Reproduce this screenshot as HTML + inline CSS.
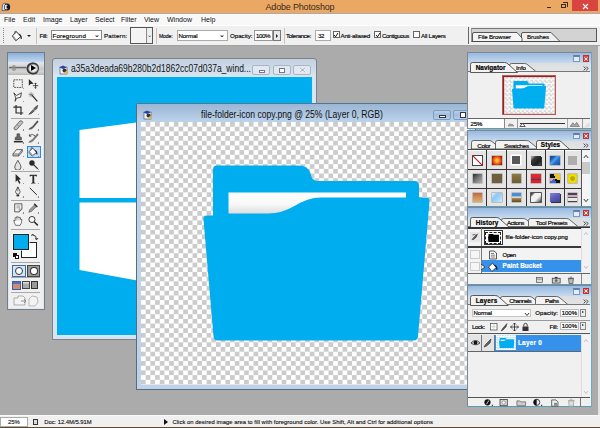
<!DOCTYPE html>
<html><head><meta charset="utf-8"><title>Adobe Photoshop</title>
<style>
*{box-sizing:border-box;margin:0;padding:0}
html,body{width:600px;height:428px;overflow:hidden}
body{position:relative;background:#ababab;font-family:"Liberation Sans",sans-serif;color:#111}
.a{position:absolute}
.t{position:absolute;white-space:nowrap;line-height:1}
#title{left:0;top:0;width:600px;height:13.2px;background:#eba864}
#menu{left:0;top:13.5px;width:600px;height:11.5px;background:#f8f8f8}
#menu span{position:absolute;top:2.4px;font-size:7.8px;transform:scaleX(.9);transform-origin:0 0;line-height:1;color:#111}
#opt{left:0;top:25px;width:600px;height:21px;background:#f0f0f0;border-top:1px solid #fff;border-bottom:1px solid #a2a2a2}
#opt .t{font-size:6.2px;top:6.5px;color:#000;-webkit-text-stroke:.15px #000}
.box{position:absolute;background:#fff;border:1px solid #8a8a8a}
.cb{position:absolute;width:7px;height:7px;background:#fff;border:1px solid #666;top:5px}
#status{left:0;top:414.5px;width:600px;height:13.5px;background:#f0f0f0;border-top:1px solid #fafafa}
#status .t{font-size:5.9px;top:4px;color:#111;-webkit-text-stroke:.12px #111}
.doc{position:absolute;background:linear-gradient(#c3d0de,#d7e4f2 17px,#d7e4f2);border:1px solid #7b8388;border-radius:3px 3px 0 0}
.pal{position:absolute;background:#f0f0f0;border:1px solid #7d8791;border-right-color:#6aa9c4;border-bottom-color:#5a9cb8}
.pal .hd{position:absolute;left:0;top:0;right:0;height:19px;background:linear-gradient(#98b9e1,#c6daee 10px,#dcdfe2 10.5px,#e2e3e4 19px)}
.pal .t{font-size:6px;color:#111;-webkit-text-stroke:.18px currentColor}
.mb{position:absolute;width:6px;height:6px;top:2px}
.tab{position:absolute;height:10px;background:#ececec;border:1px solid #555;border-bottom:none;border-radius:2px 2px 0 0}

.wb{position:absolute;width:18px;height:10px;border:1px solid #aab4c2;border-radius:2px;background:#dfe8f3}
.wb i,.wb2 i{position:absolute;display:block}
.wb2{position:absolute;width:18.5px;height:10px;border:1px solid #7f9cbd;border-radius:2px;background:linear-gradient(#b9d0ea,#9fbde0 50%,#b5cfe9)}
.checker{background:repeating-conic-gradient(#cbcbcb 0 25%,#fff 0 50%) 0 0/9.375px 9.375px}
</style></head><body>

<!-- Title bar -->
<div id="title" class="a">
  <svg class="a" style="left:1px;top:2px" width="10" height="10" viewBox="0 0 10 10"><path d="M1 8.5 L1.5 3 Q2 1 4 1.2 L5 1.5 L4 5 L4.5 8.5 Z" fill="#cfe3f4" stroke="#2b3350" stroke-width=".6"/><ellipse cx="6.2" cy="5" rx="3" ry="3.6" fill="#1c1a2a"/><ellipse cx="5.2" cy="5" rx="1.5" ry="2.6" fill="#e6ecf4"/><path d="M5.6 3.6 L8 5 L5.6 6.4 Z" fill="#000"/></svg>
  <div class="t" style="left:265.5px;top:2.8px;font-size:9px;letter-spacing:-.18px;color:#3a2a1a">Adobe Photoshop</div>
  <div class="a" style="left:546.5px;top:6.5px;width:4.5px;height:1.5px;background:#3a2a1a"></div>
  <div class="a" style="left:560.5px;top:3.5px;width:5px;height:4.5px;border:1px solid #3a2a1a"></div>
  <div class="a" style="left:562.5px;top:2px;width:5px;height:4.5px;border:1px solid #3a2a1a;border-left:none;border-bottom:none"></div>
  <div class="a" style="left:572px;top:0;width:26px;height:11px;background:#d8443f"></div>
  <svg class="a" style="left:582px;top:2.5px" width="7" height="7" viewBox="0 0 7 7"><path d="M1 1 L6 6 M6 1 L1 6" stroke="#fff" stroke-width="1.1"/></svg>
</div>

<!-- Menu bar -->
<div id="menu" class="a">
  <span style="left:4px">File</span><span style="left:23px">Edit</span><span style="left:43px">Image</span>
  <span style="left:70px">Layer</span><span style="left:95px">Select</span><span style="left:121px">Filter</span>
  <span style="left:144px">View</span><span style="left:167px">Window</span><span style="left:201px">Help</span>
</div>

<!-- Options bar -->
<div id="opt" class="a">
  <div class="a" style="left:3px;top:2px;width:0;height:15px;border-left:1px dotted #888"></div>
  <svg class="a" style="left:11px;top:3.5px" width="13" height="12" viewBox="0 0 13 12"><path d="M1.2 6 L5.6 1.8 L9.8 6.6 L4.8 10.8 Z" fill="#fafafa" stroke="#222" stroke-width=".9"/><path d="M1.2 6 L4.8 10.8 L5.8 9.9 L2.2 5.2 Z" fill="#999"/><path d="M5.6 1.8 Q3.6 -.3 3.4 3.6" fill="none" stroke="#333" stroke-width=".7"/><path d="M7.4 3.6 Q10.6 4 10.9 8.6 Q10.2 9.6 9.6 8.4 Q9.8 6 8.6 5 Z" fill="#1a1a1a"/></svg>
  <div class="a" style="left:27px;top:9px;border:2px solid transparent;border-top:2.5px solid #222;border-bottom:none"></div>
  <div class="a" style="left:36px;top:2px;width:1px;height:16px;background:#c4c4c4"></div>
  <div class="t" style="left:39.5px;letter-spacing:-0.33px">Fill:</div>
  <div class="box" style="left:51px;top:4px;width:51px;height:10px"></div>
  <div class="t" style="left:52.5px;letter-spacing:0.15px">Foreground</div>
  <div class="t" style="left:94px;top:5px;font-size:7px">⌄</div>
  <div class="t" style="left:104.0px;letter-spacing:0.23px">Pattern:</div>
  <div class="box" style="left:130px;top:1px;width:22.5px;height:17px;background:#f4f4f4;border-color:#555"></div>
  <div class="a" style="left:146px;top:2px;width:5.5px;height:15px;border-left:1px solid #888;background:#eee"></div>
  <div class="t" style="left:146.5px;top:6px;font-size:6px;color:#555">⌄</div>
  <div class="a" style="left:156px;top:2px;width:1px;height:16px;background:#c4c4c4"></div>
  <div class="t" style="left:159.0px;letter-spacing:-0.2px;transform:scaleX(.83);transform-origin:0 0">Mode:</div>
  <div class="box" style="left:176.5px;top:4px;width:51px;height:10.5px;border-color:#aaa"></div>
  <div class="t" style="left:178.5px;letter-spacing:-0.16px">Normal</div>
  <div class="t" style="left:219px;top:5px;font-size:7px">⌄</div>
  <div class="t" style="left:230.0px;letter-spacing:-0.03px">Opacity:</div>
  <div class="box" style="left:254px;top:4px;width:19px;height:10.5px;border-color:#999"></div>
  <div class="t" style="left:256.0px;letter-spacing:-0.46px">100%</div>
  <div class="box" style="left:273px;top:4px;width:8px;height:10.5px;background:#e8e8e8;border-color:#777"></div>
  <div class="a" style="left:276px;top:7.5px;border:2px solid transparent;border-left:2.5px solid #222;border-right:none"></div>
  <div class="a" style="left:283.5px;top:2px;width:1px;height:16px;background:#c4c4c4"></div>
  <div class="t" style="left:286.0px;letter-spacing:-0.35px">Tolerance:</div>
  <div class="box" style="left:315px;top:4px;width:15.5px;height:10.5px;border-color:#aaa"></div>
  <div class="t" style="left:318.0px;letter-spacing:-0.44px">32</div>
  <div class="cb" style="left:332.5px"></div><svg class="a" style="left:333px;top:5.5px" width="6" height="6" viewBox="0 0 6 6"><path d="M1 3 L2.5 4.8 L5 1" fill="none" stroke="#111" stroke-width="1"/></svg>
  <div class="t" style="left:340.5px;letter-spacing:-0.24px">Anti-aliased</div>
  <div class="cb" style="left:374px"></div><svg class="a" style="left:374.5px;top:5.5px" width="6" height="6" viewBox="0 0 6 6"><path d="M1 3 L2.5 4.8 L5 1" fill="none" stroke="#111" stroke-width="1"/></svg>
  <div class="t" style="left:382.0px;letter-spacing:-0.43px">Contiguous</div>
  <div class="cb" style="left:413px"></div>
  <div class="t" style="left:421.0px;letter-spacing:-0.25px">All Layers</div>
  <div class="a" style="left:467.5px;top:1px;width:1px;height:17px;background:#666"></div>
  <div class="a" style="left:470.5px;top:2px;width:126.5px;height:13.5px;background:#d3d3d3;border:1px solid #555;border-top-color:#777;border-left-color:#999"></div>
  <svg class="a" style="left:471px;top:5.5px" width="95" height="10" viewBox="0 0 95 10"><path d="M50.5 9.5 L50.5 2 Q50.5 0.5 52 0.5 L80 0.5 L89 9.5 Z" fill="#efefef" stroke="#333" stroke-width=".8"/><path d="M1.5 9.5 L1.5 2 Q1.5 0.5 3 0.5 L46 0.5 L51 6 L51 9.5 Z" fill="#f4f4f4" stroke="#333" stroke-width=".8"/></svg>
  <div class="t" style="left:478.0px;top:8px;letter-spacing:-0.12px">File Browser</div>
  <div class="t" style="left:527.0px;top:8px;letter-spacing:-0.10px">Brushes</div>
</div>

<!-- Toolbox -->
<div class="a" id="tb" style="left:7px;top:52px;width:37.5px;height:258px;background:#f0f0f0;border:1px solid #6f7e88;box-shadow:inset 0 0 0 1px #dfe8f0">
<div class="a" style="left:0;top:0;right:0;height:9px;background:linear-gradient(#8aaedb,#c3d8ed)"></div>
<div class="a" style="left:0;top:8.5px;right:0;height:13.5px;background:linear-gradient(#dde6ef,#d9dde2 25%,#c9c9c9 50%,#d4d4d4 75%,#b4b4b4)"></div>
<div class="a" style="left:1px;top:13.3px;width:18px;height:2.4px;background:linear-gradient(#e8e8e8,#6a6a6a 50%,#d0d0d0);border-radius:1.2px"></div>
<div class="a" style="left:4px;top:12px;width:3.5px;height:6px;background:#8e8e8e;border-radius:2px;opacity:.75"></div>
<div class="a" style="left:17.8px;top:8.8px;width:13px;height:12.8px;border-radius:50%;background:radial-gradient(ellipse at 55% 50%,#f2f2f2 0 30%,#b8b8b8 42%,#3a3a3a 52% 62%,#c8c8c8 70% 80%,#555 92%,#999 100%)"></div>
<div class="a" style="left:23.3px;top:12.4px;border:3px solid transparent;border-left:5px solid #000;border-right:none"></div>
<div class="a" style="left:18.5px;top:92.5px;width:14.5px;height:12.5px;background:#c2dcf3;border:1px solid #3b85c9"></div>
<svg class="a" style="left:3.9px;top:24.6px" width="12.6" height="11.7" viewBox="0 0 14 13"><rect x="2" y="2" width="9.5" height="8.5" fill="none" stroke="#2a2a2a" stroke-width=".9" stroke-dasharray="1.8 1"/><path d="M11.8 12.8 L13.8 12.8 L13.8 10.8 Z" fill="#2a2a2a"/></svg>
<svg class="a" style="left:18.9px;top:24.6px" width="12.6" height="11.7" viewBox="0 0 14 13"><path d="M2 1 L2 8.5 L4 6.8 L7.5 6.3 Z" fill="#2a2a2a"/><path d="M9.5 5.5 V11.5 M6.5 8.5 H12.5 M8.5 6.5 L9.5 5.5 L10.5 6.5 M8.5 10.5 L9.5 11.5 L10.5 10.5" fill="none" stroke="#2a2a2a" stroke-width=".9"/></svg>
<svg class="a" style="left:3.9px;top:37.8px" width="12.6" height="11.7" viewBox="0 0 14 13"><path d="M2 2 L5 5 L10.5 2 L9.5 7 L5 8 L3.5 11.5 L4 7 Z" fill="#f6f6f6" stroke="#2a2a2a" stroke-width=".9"/><path d="M11.8 12.8 L13.8 12.8 L13.8 10.8 Z" fill="#2a2a2a"/></svg>
<svg class="a" style="left:18.9px;top:37.8px" width="12.6" height="11.7" viewBox="0 0 14 13"><path d="M5.5 4.5 L11.5 11.5" stroke="#2a2a2a" stroke-width="1.4"/><path d="M4.5 1 V7 M1.5 4 H7.5 M2.5 2 L6.5 6 M6.5 2 L2.5 6" stroke="#555" stroke-width=".55"/></svg>
<svg class="a" style="left:3.9px;top:50.7px" width="12.6" height="11.7" viewBox="0 0 14 13"><path d="M4.5 1 V10 H12.5 M1.5 3.5 H10 V12.5" fill="none" stroke="#2a2a2a" stroke-width="1.3"/></svg>
<svg class="a" style="left:18.9px;top:50.7px" width="12.6" height="11.7" viewBox="0 0 14 13"><path d="M2 11.5 L7 6 L9 3.5 L12 1.5 L11 5 L9.5 6.5 L5 10.5 Z" fill="#666" stroke="#2a2a2a" stroke-width=".6"/><path d="M6 5 L10 8.5" stroke="#eee" stroke-width=".5"/><path d="M11.8 12.8 L13.8 12.8 L13.8 10.8 Z" fill="#2a2a2a"/></svg>
<svg class="a" style="left:3.9px;top:66.2px" width="12.6" height="11.7" viewBox="0 0 14 13"><path d="M2 10 L9 2 Q11.5 1.5 12 4 L5 12 Q2.5 12.5 2 10 Z" fill="#c4c4c4" stroke="#444" stroke-width=".8"/><path d="M5.5 6 L8.5 8.5" stroke="#777" stroke-width=".6"/><path d="M11.8 12.8 L13.8 12.8 L13.8 10.8 Z" fill="#2a2a2a"/></svg>
<svg class="a" style="left:18.9px;top:66.2px" width="12.6" height="11.7" viewBox="0 0 14 13"><path d="M2 11.5 Q4 9 6 8.5 L11.5 2 L12.5 3 L7 9.5 Q6 11.5 2 11.5 Z" fill="#555" stroke="#2a2a2a" stroke-width=".5"/><path d="M11.8 12.8 L13.8 12.8 L13.8 10.8 Z" fill="#2a2a2a"/></svg>
<svg class="a" style="left:3.9px;top:79.2px" width="12.6" height="11.7" viewBox="0 0 14 13"><path d="M5.5 2 h3 v3 l2 1 v3 H3.5 V6 l2 -1 Z" fill="#666" stroke="#2a2a2a" stroke-width=".5"/><rect x="2" y="10" width="10" height="1.6" fill="#2a2a2a"/><path d="M11.8 12.8 L13.8 12.8 L13.8 10.8 Z" fill="#2a2a2a"/></svg>
<svg class="a" style="left:18.9px;top:79.2px" width="12.6" height="11.7" viewBox="0 0 14 13"><path d="M2 11.5 Q4 9 6 8.5 L11.5 2 L12.5 3 L7 9.5 Q6 11.5 2 11.5 Z" fill="#888" stroke="#2a2a2a" stroke-width=".5"/><path d="M2.5 4.5 Q6 1 9.5 5 M2.5 4.5 l2.2 .3 M2.5 4.5 l.4 -2" fill="none" stroke="#2a2a2a" stroke-width=".8"/><path d="M11.8 12.8 L13.8 12.8 L13.8 10.8 Z" fill="#2a2a2a"/></svg>
<svg class="a" style="left:3.9px;top:92.5px" width="12.6" height="11.7" viewBox="0 0 14 13"><path d="M1 9 L5 4 L11.5 4 L7.5 9 Z" fill="#f2f2f2" stroke="#2a2a2a" stroke-width=".8"/><path d="M1 9 v2.2 h6.5 v-2.2 M7.5 11.2 L11.5 6.3 V4" fill="#aaa" stroke="#2a2a2a" stroke-width=".6"/><path d="M11.8 12.8 L13.8 12.8 L13.8 10.8 Z" fill="#2a2a2a"/></svg>
<svg class="a" style="left:18.9px;top:92.5px" width="12.6" height="11.7" viewBox="0 0 14 13"><path d="M2 6.5 L6.4 2.3 L10.6 7.1 L5.6 11.3 Z" fill="#fafafa" stroke="#2a2a2a" stroke-width=".9"/><path d="M2 6.5 L5.6 11.3 L6.6 10.4 L3 5.7 Z" fill="#999"/><path d="M6.4 2.3 Q4.4 .2 4.2 4.1" fill="none" stroke="#2a2a2a" stroke-width=".6"/><path d="M8.2 4.1 Q11.4 4.5 11.7 9.1 Q11 10.1 10.4 8.9 Q10.6 6.5 9.4 5.5 Z" fill="#1a1a1a"/><path d="M11.8 12.8 L13.8 12.8 L13.8 10.8 Z" fill="#2a2a2a"/></svg>
<svg class="a" style="left:3.9px;top:105.7px" width="12.6" height="11.7" viewBox="0 0 14 13"><path d="M6.5 1.5 Q10 7 10 9 A3.5 3.5 0 0 1 3 9 Q3 7 6.5 1.5 Z" fill="#e4e4e4" stroke="#2a2a2a" stroke-width=".8"/><path d="M11.8 12.8 L13.8 12.8 L13.8 10.8 Z" fill="#2a2a2a"/></svg>
<svg class="a" style="left:18.9px;top:105.7px" width="12.6" height="11.7" viewBox="0 0 14 13"><circle cx="5.5" cy="4.5" r="3" fill="#2a2a2a"/><path d="M7 6 L12 11" stroke="#2a2a2a" stroke-width="1.3"/><path d="M11.8 12.8 L13.8 12.8 L13.8 10.8 Z" fill="#2a2a2a"/></svg>
<svg class="a" style="left:3.9px;top:119.7px" width="12.6" height="11.7" viewBox="0 0 14 13"><path d="M4 1 L4 10 L6 8 L8 12 L9.5 11 L7.5 7.5 L10 7 Z" fill="#2a2a2a"/><path d="M11.8 12.8 L13.8 12.8 L13.8 10.8 Z" fill="#2a2a2a"/></svg>
<svg class="a" style="left:18.9px;top:119.7px" width="12.6" height="11.7" viewBox="0 0 14 13"><path d="M3 2 H11 V4 H10.3 Q10 3 8 3 V10 Q8 11 9.5 11 V11.7 H4.5 V11 Q6 11 6 10 V3 Q4 3 3.7 4 H3 Z" fill="#2a2a2a"/><path d="M11.8 12.8 L13.8 12.8 L13.8 10.8 Z" fill="#2a2a2a"/></svg>
<svg class="a" style="left:3.9px;top:133.2px" width="12.6" height="11.7" viewBox="0 0 14 13"><path d="M6.5 1 L9 6 Q9 8 7.5 9 L5.5 9 Q4 8 4 6 Z" fill="#f2f2f2" stroke="#2a2a2a" stroke-width=".8"/><path d="M6.5 1 V6" stroke="#2a2a2a" stroke-width=".6"/><rect x="5" y="9.5" width="3" height="2" fill="#2a2a2a"/><path d="M11.8 12.8 L13.8 12.8 L13.8 10.8 Z" fill="#2a2a2a"/></svg>
<svg class="a" style="left:18.9px;top:133.2px" width="12.6" height="11.7" viewBox="0 0 14 13"><path d="M3 2 L11 10" stroke="#2a2a2a" stroke-width="1.1"/><path d="M11.8 12.8 L13.8 12.8 L13.8 10.8 Z" fill="#2a2a2a"/></svg>
<svg class="a" style="left:3.9px;top:149.2px" width="12.6" height="11.7" viewBox="0 0 14 13"><path d="M3 2 H11 V8 L8 11 H3 Z" fill="#f2f2f2" stroke="#2a2a2a" stroke-width=".8"/><path d="M5 4.5 H9 M5 6.5 H9 M8 11 V8 H11" fill="none" stroke="#555" stroke-width=".6"/><path d="M11.8 12.8 L13.8 12.8 L13.8 10.8 Z" fill="#2a2a2a"/></svg>
<svg class="a" style="left:18.9px;top:149.2px" width="12.6" height="11.7" viewBox="0 0 14 13"><path d="M2 11.5 L3 8.5 L8 3.5 L10 5.5 L5 10.5 Z" fill="#999" stroke="#2a2a2a" stroke-width=".5"/><path d="M8 2 L11.5 5.5" stroke="#2a2a2a" stroke-width="1.6"/><path d="M11.8 12.8 L13.8 12.8 L13.8 10.8 Z" fill="#2a2a2a"/></svg>
<svg class="a" style="left:3.9px;top:162.2px" width="12.6" height="11.7" viewBox="0 0 14 13"><path d="M4 11.5 Q2 8 2 6 L3.5 6.5 V3 H5 V2 H6.5 V2.5 H8 V3 H9.5 V5 L11 5 Q11 9 9 11.5 Z" fill="#fcfcfc" stroke="#2a2a2a" stroke-width=".7"/><path d="M5 3 V6 M6.5 2.5 V6 M8 3 V6" stroke="#555" stroke-width=".4"/></svg>
<svg class="a" style="left:18.9px;top:162.2px" width="12.6" height="11.7" viewBox="0 0 14 13"><circle cx="5.5" cy="5" r="3.4" fill="#f6f6f6" stroke="#2a2a2a" stroke-width="1"/><path d="M8 7.5 L12 11.5" stroke="#2a2a2a" stroke-width="1.7"/></svg>
<div class="a" style="left:3px;top:64.6px;width:29px;height:1px;background:#a8a8a8"></div>
<div class="a" style="left:3px;top:118.4px;width:29px;height:1px;background:#a8a8a8"></div>
<div class="a" style="left:3px;top:147.0px;width:29px;height:1px;background:#a8a8a8"></div>
<div class="a" style="left:3px;top:176.0px;width:29px;height:1px;background:#a8a8a8"></div>
<div class="a" style="left:3px;top:209.4px;width:29px;height:1px;background:#a8a8a8"></div>
<div class="a" style="left:3px;top:224.4px;width:29px;height:1px;background:#a8a8a8"></div>
<div class="a" style="left:3px;top:239.0px;width:29px;height:1px;background:#a8a8a8"></div>
<div class="a" style="left:13px;top:189px;width:15.5px;height:16px;background:#fff;border:1px solid #222"></div>
<div class="a" style="left:5px;top:181px;width:16px;height:15.5px;background:#00adee;border:1px solid #222;box-shadow:0 0 0 .6px #fff"></div>
<div class="a" style="left:4.5px;top:199.5px;width:4px;height:4px;background:#111"></div><div class="a" style="left:6.5px;top:201.5px;width:4px;height:4px;background:#fff;border:.7px solid #111"></div>
<svg class="a" style="left:22.5px;top:179.5px" width="8" height="8" viewBox="0 0 8 8"><path d="M1.5 2 Q5.5 2 5.5 6 M0.5 3 L1.5 1 L3 2.5 M4.3 5 L5.5 7 L7 5" fill="none" stroke="#222" stroke-width=".8"/></svg>
<div class="a" style="left:4px;top:211.5px;width:14px;height:12px;background:#d5e6f6;border:1px solid #3b6ea5"></div><div class="a" style="left:7px;top:213.5px;width:8px;height:8px;border-radius:50%;background:#fff;border:1px solid #333"></div>
<div class="a" style="left:19px;top:211.5px;width:13px;height:12px;background:#999;border:1px solid #444"></div><div class="a" style="left:22px;top:213.5px;width:7.5px;height:8px;border-radius:50%;background:#fff;border:1px solid #333"></div>
<div class="a" style="left:3.5px;top:227.5px;width:9px;height:9px;background:#d08a7a;border:1px solid #3b5ea5;box-shadow:inset 0 2px 0 #5572b8"></div>
<div class="a" style="left:14px;top:228px;width:7.5px;height:8px;background:#aaa;border:1px solid #444;box-shadow:inset 0 1.5px 0 #ddd"></div>
<div class="a" style="left:22.5px;top:228px;width:7.5px;height:8px;background:#999;border:1px solid #333"></div>
<svg class="a" style="left:4px;top:241px" width="29" height="14" viewBox="0 0 29 14"><path d="M2 4 h4 v-2 h5 l2 2 v7 H2 Z" fill="#f3f3f3" stroke="#999" stroke-width=".8"/><path d="M9 7 h5 l-2 -2 M14 7 l-2 2" fill="none" stroke="#888" stroke-width=".9"/><path d="M17 5 l3 -3 l5 1 l1 5 l-3 4 h-6 Z" fill="#f3f3f3" stroke="#aaa" stroke-width=".8"/></svg>
</div>

<!-- Document window 1 -->
<div class="doc" id="doc1" style="left:52px;top:58px;width:265px;height:282px">
  <div class="a" style="left:4px;top:18px;width:255px;height:258px;background:#00adee;overflow:hidden">
    <svg class="a" style="left:0;top:0" width="255" height="259" viewBox="57 77 255 259"><polygon points="79.5,130 140,122 140,198 79.5,198" fill="#fff"/><polygon points="79.5,202.5 140,202.5 140,281 79.5,270" fill="#fff"/></svg>
  </div>
  <svg class="a" style="left:6px;top:6px" width="10" height="10" viewBox="0 0 10 10"><rect x="1" y="2" width="7" height="7" fill="#f4f4f4" stroke="#445" stroke-width=".6"/><path d="M0.5 2.5 L4 0.5 L7.5 2.5 L4 4 Z" fill="#2540b0"/><circle cx="5.5" cy="5.5" r="2" fill="#333"/><rect x="6.5" y="6" width="2.5" height="3" fill="#d9b24a"/></svg>
  <div class="t" style="left:17.5px;top:4.8px;font-size:10.2px;transform-origin:0 0;transform:scaleX(.836);color:#111">a35a3deada69b280b2d1862cc07d037a_wind...</div>
  <div class="wb" style="left:199px;top:5.5px"><i style="left:5.5px;top:4.5px;width:6px;height:2.5px;border:.8px solid #778;background:#fff"></i></div>
  <div class="wb" style="left:219.5px;top:5.5px"><i style="left:5.5px;top:2px;width:6px;height:5px;border:.8px solid #778;border-top-width:1.5px;background:#fff"></i></div>
  <div class="wb" style="left:239.5px;top:5.5px"><svg class="a" style="left:5px;top:1.5px" width="7" height="6" viewBox="0 0 7 6"><path d="M1 .8 L6 5.2 M6 .8 L1 5.2" stroke="#fff" stroke-width="2"/><path d="M1 .8 L6 5.2 M6 .8 L1 5.2" stroke="#778" stroke-width=".7"/></svg></div>
</div>

<!-- Document window 2 -->
<div class="doc" id="doc2" style="left:136px;top:103px;width:340px;height:287px;background:#bcd3eb;border-color:#5f6b74;border-top-color:#4a7a98;border-radius:2px 2px 0 0">
  <div class="a" style="left:0;top:0;right:0;height:18px;background:linear-gradient(#9bb5d3,#bcd3eb)"></div>
  <div class="a checker" style="left:3.5px;top:17.5px;width:330px;height:263.5px"></div>
  <svg class="a" style="left:3.5px;top:17.5px" width="330" height="264" viewBox="140.5 121.5 330 264">
    <path d="M212.5,169 Q212.5,165 216.5,165 L298,165 Q308,165 310,173 Q311.5,180.5 317,180.5 L414,180.5 Q418.5,180.5 418.5,185 L418.5,230 L212.5,230 Z" fill="#00adee"/>
    <defs><linearGradient id="pg" x1="0" y1="0" x2="0" y2="1"><stop offset="0" stop-color="#ffffff"/><stop offset=".55" stop-color="#f8f8f8"/><stop offset="1" stop-color="#dedede"/></linearGradient></defs>
    <path d="M228,192 L405.5,192 L405.5,198 L320,198 Q307,198 294,205.5 Q281,213 268,213 L228,213 Z" fill="url(#pg)"/>
    <path d="M203,219 Q202.5,215 207,215 L268,215 Q281,215 294,206 Q307,197 320,197 L425,197 Q429.5,197 429,201 L417.5,336 Q417,340 413,340 L217,340 Q213.5,340 213,336 Z" fill="#00adee"/>
  </svg>
  <svg class="a" style="left:5.5px;top:5.5px" width="10" height="10" viewBox="0 0 10 10"><rect x="1" y="2" width="7" height="7" fill="#f4f4f4" stroke="#445" stroke-width=".6"/><path d="M0.5 2.5 L4 0.5 L7.5 2.5 L4 4 Z" fill="#2540b0"/><circle cx="5.5" cy="5.5" r="2" fill="#333"/><rect x="6.5" y="6" width="2.5" height="3" fill="#d9b24a"/></svg>
  <div class="t" style="left:63.5px;top:5.5px;font-size:10.2px;transform-origin:0 0;transform:scaleX(.845);color:#111">file-folder-icon copy.png @ 25% (Layer 0, RGB)</div>
  <div class="wb2" style="left:295.5px;top:5.5px"><i style="left:5.5px;top:4.5px;width:6.5px;height:2.5px;border:.7px solid #334;background:#fff"></i></div>
  <div class="wb2" style="left:316px;top:5.5px"><i style="left:5.5px;top:1.5px;width:6.5px;height:5.5px;border:.8px solid #334;border-top-width:1.6px;background:#fff"></i></div>
</div>

<div class="a" id="rstrip" style="left:598px;top:46px;width:2px;height:369px;background:#e2e2e2"></div>
<!-- Palettes -->
<div class="pal" style="left:467.4px;top:52.4px;width:124.2px;height:76.3px">
<div class="hd"></div>
<div class="mb" style="left:104.5px;top:2px;width:7.5px;height:6.5px;background:#e4ecf6;border:1px solid #7e97b8;border-top:2px solid #5f7ea8"></div>
<div class="mb" style="left:114.3px;top:2px;width:6.7px;height:6.3px;background:#d9534b;border:.5px solid #b33"></div><svg class="a" style="left:115.7px;top:3.2px" width="4" height="4" viewBox="0 0 4 4"><path d="M.5 .5 L3.5 3.5 M3.5 .5 L.5 3.5" stroke="#fff" stroke-width=".9"/></svg>
<svg class="a" style="left:114.5px;top:12.8px" width="6" height="5" viewBox="0 0 6 5"><path d="M.7 .6 L2.6 2.5 L.7 4.4 M3.2 .6 L5.1 2.5 L3.2 4.4" fill="none" stroke="#333" stroke-width=".9"/></svg>
<svg class="a" style="left:41px;top:9.5px" width="31.5" height="9" viewBox="0 0 31.5 9"><path d="M0.5 9 L0.5 2.5 Q0.5 0.5 2.5 0.5 L15.5 0.5 Q17.5 0.5 19.0 2 L27.5 9 Z" fill="#f2f2f2" stroke="#444" stroke-width=".8"/></svg>
<div class="t" style="left:47.6px;top:12px;font-size:6.2px;color:#000;letter-spacing:-0.08px">Info</div>
<div class="a" style="left:0;top:18.0px;width:122px;height:1px;background:#777"></div>
<svg class="a" style="left:2px;top:9.0px" width="50.5" height="10.5" viewBox="0 0 50.5 10.5"><path d="M0.5 10.5 L0.5 2.5 Q0.5 0.5 2.5 0.5 L34.5 0.5 Q36.5 0.5 38.0 2 L47.5 10.5 Z" fill="#f3f3f3" stroke="#333" stroke-width=".8"/></svg>
<div class="t" style="left:7.3px;top:11.5px;font-size:6.4px;font-weight:bold;color:#000;letter-spacing:0.04px">Navigator</div>
<div class="a" style="left:33.5px;top:21.4px;width:54.5px;height:40.7px;background:#8a2626;border:1px solid #b85a56"></div>
<div class="a" style="left:35.3px;top:23.2px;width:50.9px;height:37.1px;background:repeating-conic-gradient(#d9d9d9 0 25%,#fbfbfb 0 50%) 0 0/4.4px 4.4px;box-shadow:inset 0 0 0 .6px #e8b0ae"></div>
<svg class="a" style="left:43.9px;top:28px" width="34" height="27.4" viewBox="203 165 226 175" preserveAspectRatio="none"><path d="M212.5,169 Q212.5,165 216.5,165 L298,165 Q308,165 310,173 Q311.5,180.5 317,180.5 L414,180.5 Q418.5,180.5 418.5,185 L418.5,230 L212.5,230 Z" fill="#00adee"/><path d="M228,192 L405.5,192 L405.5,198 L320,198 Q307,198 294,205.5 Q281,213 268,213 L228,213 Z" fill="#fff"/><path d="M203,219 Q202.5,215 207,215 L268,215 Q281,215 294,206 Q307,197 320,197 L425,197 Q429.5,197 429,201 L417.5,336 Q417,340 413,340 L217,340 Q213.5,340 213,336 Z" fill="#00adee"/></svg>
<div class="a" style="left:0;top:64.6px;width:122px;height:1px;background:#666"></div>
<div class="a" style="left:0;top:65.6px;width:36.2px;height:9px;background:#fff;border-right:1px solid #888"></div><div class="t" style="left:2px;top:67.5px;font-size:6px;color:#000">25%</div>
<svg class="a" style="left:38.5px;top:67.5px" width="8" height="6" viewBox="0 0 8 6"><path d="M1 5 L3 2.5 L4 3.8 L5 3 L7 5 Z" fill="#aaa" stroke="#666" stroke-width=".5"/></svg>
<div class="a" style="left:49px;top:65.6px;width:1px;height:9px;background:#999"></div>
<div class="a" style="left:52px;top:69.3px;width:44.5px;height:1px;background:#333"></div>
<svg class="a" style="left:51px;top:69px" width="7" height="5.5" viewBox="0 0 8 6"><path d="M1 5 L4 1 L7 5 Z" fill="#eee" stroke="#222" stroke-width=".8"/></svg>
<div class="a" style="left:98.5px;top:65.6px;width:1px;height:9px;background:#aaa"></div>
<svg class="a" style="left:100.5px;top:66.5px" width="11.5" height="7.5" viewBox="0 0 12 8"><path d="M1 7 L4 3 L6 5.2 L8 2.5 L11 7 Z" fill="#aaa" stroke="#555" stroke-width=".6"/></svg>
<div class="a" style="left:113.3px;top:65.6px;width:1px;height:9px;background:#999"></div>
<svg class="a" style="left:115.5px;top:68.5px" width="6" height="6" viewBox="0 0 6 6"><path d="M5.5 1 L1 5.5 M5.5 3.2 L3.2 5.5" stroke="#bbb" stroke-width=".8"/></svg>
</div>
<div class="pal" style="left:467.4px;top:129.5px;width:124.2px;height:77.5px">
<div class="hd"></div>
<div class="mb" style="left:104.5px;top:2px;width:7.5px;height:6.5px;background:#e4ecf6;border:1px solid #7e97b8;border-top:2px solid #5f7ea8"></div>
<div class="mb" style="left:114.3px;top:2px;width:6.7px;height:6.3px;background:#d9534b;border:.5px solid #b33"></div><svg class="a" style="left:115.7px;top:3.2px" width="4" height="4" viewBox="0 0 4 4"><path d="M.5 .5 L3.5 3.5 M3.5 .5 L.5 3.5" stroke="#fff" stroke-width=".9"/></svg>
<svg class="a" style="left:114.5px;top:12.8px" width="6" height="5" viewBox="0 0 6 5"><path d="M.7 .6 L2.6 2.5 L.7 4.4 M3.2 .6 L5.1 2.5 L3.2 4.4" fill="none" stroke="#333" stroke-width=".9"/></svg>
<svg class="a" style="left:2.4000000000000004px;top:9.5px" width="34.1" height="9" viewBox="0 0 34.1 9"><path d="M0.5 9 L0.5 2.5 Q0.5 0.5 2.5 0.5 L18.1 0.5 Q20.1 0.5 21.6 2 L30.1 9 Z" fill="#f2f2f2" stroke="#444" stroke-width=".8"/></svg>
<div class="t" style="left:8.9px;top:12px;font-size:6.2px;color:#000;letter-spacing:-0.36px">Color</div>
<svg class="a" style="left:27px;top:9.5px" width="47.5" height="9" viewBox="0 0 47.5 9"><path d="M0.5 9 L0.5 2.5 Q0.5 0.5 2.5 0.5 L31.5 0.5 Q33.5 0.5 35.0 2 L43.5 9 Z" fill="#f2f2f2" stroke="#444" stroke-width=".8"/></svg>
<div class="t" style="left:35.6px;top:12px;font-size:6.2px;color:#000;letter-spacing:-0.25px">Swatches</div>
<div class="a" style="left:0;top:18.0px;width:122px;height:1px;background:#777"></div>
<svg class="a" style="left:68px;top:9.0px" width="37.9" height="10.5" viewBox="0 0 37.9 10.5"><path d="M0.5 10.5 L0.5 2.5 Q0.5 0.5 2.5 0.5 L21.9 0.5 Q23.9 0.5 25.4 2 L34.9 10.5 Z" fill="#f3f3f3" stroke="#333" stroke-width=".8"/></svg>
<div class="t" style="left:72.4px;top:11.5px;font-size:6.4px;font-weight:bold;color:#000;letter-spacing:0.11px">Styles</div>
<div class="a" style="left:0;top:19.4px;width:112.4px;height:56.6px;background:#e5e5e5;box-shadow:inset 0 1px 0 #fff"></div>
<div class="a" style="left:4.0px;top:24.7px;width:10.4px;height:10.4px;background:#fff;border:.8px solid #444"></div>
<div class="a" style="left:23.6px;top:25.1px;width:9.6px;height:9.6px;background:radial-gradient(circle,#ffc030 0 18%,#f05a18 50%,#c02410 75%,#6a1a10);box-shadow:0 0 0 .5px rgba(0,0,0,.35)"></div>
<div class="a" style="left:44.0px;top:25.9px;width:8px;height:8px;background:#585858;box-shadow:0 0 0 1.6px #fff,0 0 1px 2px #ddd"></div>
<div class="a" style="left:62.7px;top:25.1px;width:9.6px;height:9.6px;background:linear-gradient(135deg,#9a9a9a 0 12%,#3a3a3a 30%,#1e1e1e 70%,#555);box-shadow:1.2px 1.2px .5px #333"></div>
<div class="a" style="left:81.9px;top:25.1px;width:9.6px;height:9.6px;background:linear-gradient(135deg,#1a50a8 0 20%,#4aa4ee 45%,#2a72cc 60%,#1a50a8);box-shadow:0 0 0 .5px rgba(0,0,0,.35)"></div>
<div class="a" style="left:99.5px;top:25.1px;width:9.6px;height:9.6px;background:#adadad"></div>
<div class="a" style="left:4.4px;top:43.2px;width:9.6px;height:9.6px;background:linear-gradient(135deg,#2a2a2a,#7a7a7a 50%,#b0b0b0);box-shadow:0 0 0 .5px rgba(0,0,0,.35)"></div>
<div class="a" style="left:23.6px;top:43.2px;width:9.6px;height:9.6px;background:#6e5f3e;box-shadow:0 0 0 .5px rgba(0,0,0,.35)"></div>
<div class="a" style="left:43.2px;top:43.2px;width:9.6px;height:9.6px;background:linear-gradient(#8c7a42,#6a5c34);box-shadow:0 0 0 .5px rgba(0,0,0,.35)"></div>
<div class="a" style="left:62.7px;top:43.2px;width:9.6px;height:9.6px;background:linear-gradient(#e02a30 0 28%,#5a3a5a 28% 38%,#d8232c 38% 60%,#5a3a5a 60% 70%,#d8232c 70%);box-shadow:0 0 0 .5px rgba(0,0,0,.35)"></div>
<div class="a" style="left:81.9px;top:43.2px;width:9.6px;height:9.6px;background:conic-gradient(from 40deg,#e6c82a 0 20%,#111 20% 35%,#3a6ad0 35% 55%,#e0a0b0 55% 65%,#111 65% 85%,#e6c82a 85%);box-shadow:0 0 0 .5px rgba(0,0,0,.35)"></div>
<div class="a" style="left:99.5px;top:43.2px;width:9.6px;height:9.6px;background:radial-gradient(circle,#b8a800 0 30%,#f0e000 45%,#e0cc00);box-shadow:0 0 0 .5px rgba(0,0,0,.35)"></div>
<div class="a" style="left:4.4px;top:62.2px;width:9.6px;height:9.6px;background:linear-gradient(#c46644,#d09058 50%,#dab070);box-shadow:0 0 0 .5px rgba(0,0,0,.35)"></div>
<div class="a" style="left:23.6px;top:62.2px;width:9.6px;height:9.6px;background:linear-gradient(135deg,#e8f4fc,#8cc8f4 35%,#a8d8f8 70%,#d8ecfa);box-shadow:0 0 0 .5px rgba(0,0,0,.35)"></div>
<div class="a" style="left:43.2px;top:62.2px;width:9.6px;height:9.6px;background:linear-gradient(#4a8ed8 0 30%,#e8eef2 48%,#b08a44 58%,#5a4a20);box-shadow:0 0 0 .5px rgba(0,0,0,.35)"></div>
<div class="a" style="left:62.7px;top:62.2px;width:9.6px;height:9.6px;background:linear-gradient(135deg,#555 0 12%,#f2f2f2 25% 60%,#999 80%,#333);box-shadow:0 0 0 .8px #333"></div>
<div class="a" style="left:81.9px;top:62.2px;width:9.6px;height:9.6px;background:linear-gradient(150deg,#8484d8,#5a5ab8 50%,#44449a);box-shadow:1.2px 1.2px .5px #333"></div>
<div class="a" style="left:99.5px;top:62.2px;width:9.6px;height:9.6px;background:linear-gradient(#444 0 18%,#d4a4c4 18% 48%,#555 48% 58%,#e8e8e8 58% 86%,#444 86%);box-shadow:0 0 0 .5px rgba(0,0,0,.35)"></div>
<div class="a" style="left:18.1px;top:19.4px;width:1px;height:56.6px;background:#333"></div><div class="a" style="left:37.6px;top:19.4px;width:1px;height:56.6px;background:#333"></div><div class="a" style="left:57.3px;top:19.4px;width:1px;height:56.6px;background:#333"></div><div class="a" style="left:76.6px;top:19.4px;width:1px;height:56.6px;background:#333"></div><div class="a" style="left:95.7px;top:19.4px;width:1px;height:56.6px;background:#333"></div><div class="a" style="left:0;top:38.7px;width:112.4px;height:1px;background:#333"></div><div class="a" style="left:0;top:57.4px;width:112.4px;height:1px;background:#333"></div><div class="a" style="left:0;top:18.799999999999997px;width:122px;height:1px;background:#444"></div>
<svg class="a" style="left:4px;top:24.7px" width="11" height="11" viewBox="0 0 11 11"><path d="M0.3 0.3 L10.6 10.6" stroke="#c8182a" stroke-width="1.2"/></svg>
<div class="a" style="left:112.4px;top:19.4px;width:9.6px;height:56.6px;background:#f4f4f4;border-left:1px solid #555"></div><div class="a" style="left:113.6px;top:31.4px;width:8.2px;height:12px;background:#c9c9c9"></div>
<svg class="a" style="left:114.5px;top:23.4px" width="6" height="5" viewBox="0 0 6 5"><path d="M.8 4 L3 1.3 L5.2 4" fill="none" stroke="#333" stroke-width="1"/></svg><svg class="a" style="left:114.5px;top:67.9px" width="6" height="5" viewBox="0 0 6 5"><path d="M.8 1 L3 3.7 L5.2 1" fill="none" stroke="#333" stroke-width="1"/></svg>
</div>
<div class="pal" style="left:467.4px;top:207px;width:124.2px;height:78px">
<div class="hd"></div>
<div class="mb" style="left:104.5px;top:2px;width:7.5px;height:6.5px;background:#e4ecf6;border:1px solid #7e97b8;border-top:2px solid #5f7ea8"></div>
<div class="mb" style="left:114.3px;top:2px;width:6.7px;height:6.3px;background:#d9534b;border:.5px solid #b33"></div><svg class="a" style="left:115.7px;top:3.2px" width="4" height="4" viewBox="0 0 4 4"><path d="M.5 .5 L3.5 3.5 M3.5 .5 L.5 3.5" stroke="#fff" stroke-width=".9"/></svg>
<svg class="a" style="left:114.5px;top:12.8px" width="6" height="5" viewBox="0 0 6 5"><path d="M.7 .6 L2.6 2.5 L.7 4.4 M3.2 .6 L5.1 2.5 L3.2 4.4" fill="none" stroke="#333" stroke-width=".9"/></svg>
<svg class="a" style="left:33px;top:9.5px" width="38.3" height="9" viewBox="0 0 38.3 9"><path d="M0.5 9 L0.5 2.5 Q0.5 0.5 2.5 0.5 L22.3 0.5 Q24.3 0.5 25.8 2 L34.3 9 Z" fill="#f2f2f2" stroke="#444" stroke-width=".8"/></svg>
<div class="t" style="left:38.6px;top:12px;font-size:6.2px;color:#000;letter-spacing:-0.47px">Actions</div>
<svg class="a" style="left:60px;top:9.5px" width="54.5" height="9" viewBox="0 0 54.5 9"><path d="M0.5 9 L0.5 2.5 Q0.5 0.5 2.5 0.5 L38.5 0.5 Q40.5 0.5 42.0 2 L50.5 9 Z" fill="#f2f2f2" stroke="#444" stroke-width=".8"/></svg>
<div class="t" style="left:67.4px;top:12px;font-size:6.2px;color:#000;letter-spacing:-0.20px">Tool Presets</div>
<div class="a" style="left:0;top:18.0px;width:122px;height:1px;background:#777"></div>
<svg class="a" style="left:1.7999999999999998px;top:9.0px" width="42.4" height="10.5" viewBox="0 0 42.4 10.5"><path d="M0.5 10.5 L0.5 2.5 Q0.5 0.5 2.5 0.5 L26.4 0.5 Q28.4 0.5 29.9 2 L39.4 10.5 Z" fill="#f3f3f3" stroke="#333" stroke-width=".8"/></svg>
<div class="t" style="left:7.4px;top:11.5px;font-size:6.4px;font-weight:bold;color:#000;letter-spacing:0.10px">History</div>
<div class="a" style="left:0;top:18.5px;width:122px;height:2px;background:#333"></div><div class="a" style="left:0;top:20.5px;width:112.5px;height:44.5px;background:#f3f3f3"></div>
<div class="a" style="left:0;top:19.5px;width:13.5px;height:45.5px;border-right:1px solid #777"></div>
<div class="a" style="left:2px;top:23.5px;width:9.5px;height:10px;background:#e6e6e6"></div><svg class="a" style="left:3px;top:24.5px" width="8" height="8" viewBox="0 0 8 8"><path d="M1 6.5 L3 4 L6.5 1 L5 4.5 L2.5 6.5 Z" fill="#666" stroke="#222" stroke-width=".5"/><path d="M1.5 2 Q4 0.5 5.5 3" fill="none" stroke="#222" stroke-width=".7"/></svg>
<div class="a" style="left:15.2px;top:22.3px;width:19px;height:15px;background:#fff;border:.8px solid #333"></div><div class="a" style="left:16.6px;top:23.6px;width:16.2px;height:12.4px;border:1.2px dashed #222"></div>
<svg class="a" style="left:19.2px;top:25.7px" width="11.7" height="8.8" viewBox="203 165 226 175" preserveAspectRatio="none"><path d="M212.5,169 Q212.5,165 216.5,165 L298,165 Q308,165 310,173 Q311.5,180.5 317,180.5 L414,180.5 Q418.5,180.5 418.5,185 L418.5,230 L212.5,230 Z" fill="#000"/><path d="M203,219 Q202.5,215 207,215 L268,215 Q281,215 294,206 Q307,197 320,197 L425,197 Q429.5,197 429,201 L417.5,336 Q417,340 413,340 L217,340 Q213.5,340 213,336 Z" fill="#000"/></svg>
<div class="t" style="left:37.0px;top:26px;font-size:6px;color:#000;letter-spacing:-0.03px">file-folder-icon copy.png</div>
<div class="a" style="left:0;top:38.2px;width:112.5px;height:2.2px;background:#3a3a3a"></div>
<div class="a" style="left:2px;top:42px;width:10px;height:9px;border:1px solid #ccc;background:#f6f6f6"></div><div class="a" style="left:2px;top:53.5px;width:10px;height:9px;border:1px solid #ccc;background:#f6f6f6"></div>
<svg class="a" style="left:20px;top:41.5px" width="10" height="10" viewBox="0 0 10 10"><path d="M1.5 1 H6 L8.5 3 V9 H1.5 Z" fill="#f4f4f4" stroke="#333" stroke-width=".8"/><path d="M3 3.5 H6 M3 5.2 H7 M3 7 H7" stroke="#555" stroke-width=".7"/></svg>
<div class="t" style="left:34.2px;top:44px;font-size:6px;color:#000;letter-spacing:-0.37px">Open</div>
<div class="a" style="left:14px;top:52px;width:98.5px;height:11.5px;background:#3591ea"></div>
<svg class="a" style="left:13px;top:52.5px" width="20" height="12" viewBox="0 0 20 12"><path d="M0 3 L4 6 L0 9 Z" fill="#fff" stroke="#222" stroke-width=".8"/><path d="M7.5 6 L11.5 2.2 L15.3 6.6 L10.8 10.4 Z" fill="#fff" stroke="#222" stroke-width=".8"/><path d="M13 3.8 Q16.2 4.2 16.5 8.4 Q15.8 9.4 15.3 8.2 Q15.4 6 14.2 5.2 Z" fill="#111"/></svg>
<div class="t" style="left:34.2px;top:55px;font-size:6.4px;font-weight:bold;color:#fff;letter-spacing:0.04px">Paint Bucket</div>
<div class="a" style="left:112.5px;top:19.5px;width:9.5px;height:45.5px;background:#f2f2f2;border-left:1px solid #ddd"></div>
<svg class="a" style="left:114.3px;top:23px" width="6" height="5" viewBox="0 0 6 5"><path d="M1 4 L3 1.5 L5 4" fill="none" stroke="#bbb" stroke-width=".9"/></svg><svg class="a" style="left:114.3px;top:57px" width="6" height="5" viewBox="0 0 6 5"><path d="M1 1 L3 3.5 L5 1" fill="none" stroke="#bbb" stroke-width=".9"/></svg>
<div class="a" style="left:0;top:65px;width:122px;height:1px;background:#666"></div>
<div class="a" style="left:112.5px;top:66px;width:1px;height:10px;background:#888"></div><svg class="a" style="left:64px;top:67.5px" width="44" height="8" viewBox="0 0 50 9"><rect x="5" y="1.5" width="7" height="6" fill="#ddd" stroke="#444" stroke-width=".7"/><path d="M5 3.5 h7" stroke="#444" stroke-width=".6"/><rect x="23" y="2.5" width="9" height="5.5" fill="#ccc" stroke="#333" stroke-width=".8"/><rect x="26" y="1" width="3" height="1.5" fill="#333"/><circle cx="27.5" cy="5.2" r="1.6" fill="#666"/><path d="M41.5 3 h5.5 l-.6 5.5 h-4.3 Z M40.8 2.5 h7 M43 1.2 h2.5" fill="#bbb" stroke="#333" stroke-width=".7"/></svg>
</div>
<div class="pal" style="left:467.4px;top:285px;width:124.2px;height:122px">
<div class="hd"></div>
<div class="mb" style="left:104.5px;top:2px;width:7.5px;height:6.5px;background:#e4ecf6;border:1px solid #7e97b8;border-top:2px solid #5f7ea8"></div>
<div class="mb" style="left:114.3px;top:2px;width:6.7px;height:6.3px;background:#d9534b;border:.5px solid #b33"></div><svg class="a" style="left:115.7px;top:3.2px" width="4" height="4" viewBox="0 0 4 4"><path d="M.5 .5 L3.5 3.5 M3.5 .5 L.5 3.5" stroke="#fff" stroke-width=".9"/></svg>
<svg class="a" style="left:114.5px;top:12.8px" width="6" height="5" viewBox="0 0 6 5"><path d="M.7 .6 L2.6 2.5 L.7 4.4 M3.2 .6 L5.1 2.5 L3.2 4.4" fill="none" stroke="#333" stroke-width=".9"/></svg>
<svg class="a" style="left:32px;top:9.5px" width="45.5" height="9" viewBox="0 0 45.5 9"><path d="M0.5 9 L0.5 2.5 Q0.5 0.5 2.5 0.5 L29.5 0.5 Q31.5 0.5 33.0 2 L41.5 9 Z" fill="#f2f2f2" stroke="#444" stroke-width=".8"/></svg>
<div class="t" style="left:40.9px;top:12px;font-size:6.2px;color:#000;letter-spacing:-0.56px">Channels</div>
<svg class="a" style="left:67px;top:9.5px" width="37.5" height="9" viewBox="0 0 37.5 9"><path d="M0.5 9 L0.5 2.5 Q0.5 0.5 2.5 0.5 L21.5 0.5 Q23.5 0.5 25.0 2 L33.5 9 Z" fill="#f2f2f2" stroke="#444" stroke-width=".8"/></svg>
<div class="t" style="left:76.6px;top:12px;font-size:6.2px;color:#000;letter-spacing:-0.43px">Paths</div>
<div class="a" style="left:0;top:18.0px;width:122px;height:1px;background:#777"></div>
<svg class="a" style="left:1.7999999999999998px;top:9.0px" width="41.3" height="10.5" viewBox="0 0 41.3 10.5"><path d="M0.5 10.5 L0.5 2.5 Q0.5 0.5 2.5 0.5 L25.3 0.5 Q27.3 0.5 28.8 2 L38.3 10.5 Z" fill="#f3f3f3" stroke="#333" stroke-width=".8"/></svg>
<div class="t" style="left:7.4px;top:11.5px;font-size:6.4px;font-weight:bold;color:#000;letter-spacing:0.17px">Layers</div>
<div class="box" style="left:3.5px;top:22.5px;width:59.5px;height:8.5px;border-color:#c4c4c4"></div><div class="t" style="left:5.2px;top:24.0px;font-size:6px;color:#000;letter-spacing:-0.17px">Normal</div><svg class="a" style="left:55.5px;top:25.5px" width="6" height="5" viewBox="0 0 6 5"><path d="M1 1 L3 3.5 L5 1" fill="none" stroke="#222" stroke-width=".9"/></svg>
<div class="t" style="left:66.9px;top:24.0px;font-size:6px;color:#000;letter-spacing:0.09px">Opacity:</div><div class="box" style="left:91.8px;top:22.5px;width:18.4px;height:8.5px;border-color:#bbb"></div><div class="t" style="left:93.3px;top:24.0px;font-size:6px;color:#000">100%</div>
<div class="box" style="left:111.7px;top:22.5px;width:6px;height:8.5px;background:#eee;border-color:#888"></div><div class="a" style="left:113.8px;top:25.0px;border:1.8px solid transparent;border-left:2.5px solid #222;border-right:none"></div>
<div class="a" style="left:0;top:34px;width:122px;height:1px;background:#999"></div>
<div class="t" style="left:3.6px;top:37.5px;font-size:6px;color:#000;letter-spacing:-0.27px">Lock:</div>
<svg class="a" style="left:21px;top:35.5px" width="50" height="10" viewBox="0 0 50 10"><rect x="1.5" y="1.5" width="6.5" height="6.5" fill="#fff" stroke="#444" stroke-width=".7"/><path d="M1.5 4.75 h6.5 M4.75 1.5 v6.5" stroke="#bbb" stroke-width=".6"/><path d="M12 9 L14 6 L18 1.5 L17 5 L14 8 Z" fill="#555" stroke="#222" stroke-width=".5"/><path d="M25.5 1 V9 M21.5 5 H29.5 M24 2.5 L25.5 1 L27 2.5 M24 7.5 L25.5 9 L27 7.5 M23 3.5 L21.5 5 L23 6.5 M28 3.5 L29.5 5 L28 6.5" fill="none" stroke="#222" stroke-width=".8"/><rect x="33.5" y="4.5" width="6" height="4.5" fill="#333"/><path d="M34.8 4.5 V3 a1.7 1.7 0 0 1 3.4 0 V4.5" fill="none" stroke="#333" stroke-width=".9"/></svg>
<div class="t" style="left:81.0px;top:37.5px;font-size:6px;color:#000;letter-spacing:-0.15px">Fill:</div><div class="box" style="left:91.8px;top:35.5px;width:18.4px;height:8.5px;border-color:#bbb"></div><div class="t" style="left:93.3px;top:37.0px;font-size:6px;color:#000">100%</div>
<div class="box" style="left:111.7px;top:35.5px;width:6px;height:8.5px;background:#eee;border-color:#888"></div><div class="a" style="left:113.8px;top:38.0px;border:1.8px solid transparent;border-left:2.5px solid #222;border-right:none"></div>
<div class="a" style="left:0;top:47px;width:122px;height:1px;background:#555"></div>
<div class="a" style="left:0;top:48.5px;width:112.5px;height:17.5px;background:#e4e4e4;border-bottom:1px solid #666"></div>
<div class="a" style="left:26.5px;top:48.5px;width:86px;height:16.5px;background:#3591ea"></div>
<div class="a" style="left:13px;top:48.5px;width:1px;height:16.5px;background:#777"></div><div class="a" style="left:26px;top:48.5px;width:1px;height:16.5px;background:#777"></div>
<svg class="a" style="left:1.5px;top:52.0px" width="11" height="9" viewBox="0 0 11 9"><path d="M1 5 Q5.5 0 10 5 Q5.5 8.5 1 5 Z" fill="#ddd" stroke="#222" stroke-width=".8"/><circle cx="5.5" cy="4.6" r="1.9" fill="#111"/></svg>
<svg class="a" style="left:15px;top:51.5px" width="10" height="10" viewBox="0 0 10 10"><path d="M1 9 L3 6 L8 1 L7 5 L3.5 8 Z" fill="#666" stroke="#222" stroke-width=".6"/></svg>
<div class="a" style="left:28px;top:48.9px;width:20px;height:15.3px;background:repeating-conic-gradient(#b5dcf7 0 25%,#fff 0 50%) 0 0/2.6px 2.6px"></div>
<svg class="a" style="left:30.6px;top:51.5px" width="15.4" height="10.6" viewBox="203 165 226 175" preserveAspectRatio="none"><path d="M212.5,169 Q212.5,165 216.5,165 L298,165 Q308,165 310,173 Q311.5,180.5 317,180.5 L414,180.5 Q418.5,180.5 418.5,185 L418.5,230 L212.5,230 Z" fill="#00adee"/><path d="M228,192 L405.5,192 L405.5,198 L320,198 Q307,198 294,205.5 Q281,213 268,213 L228,213 Z" fill="#fff"/><path d="M203,219 Q202.5,215 207,215 L268,215 Q281,215 294,206 Q307,197 320,197 L425,197 Q429.5,197 429,201 L417.5,336 Q417,340 413,340 L217,340 Q213.5,340 213,336 Z" fill="#00adee"/></svg>
<div class="t" style="left:49.6px;top:53.5px;font-size:6.4px;font-weight:bold;color:#fff;letter-spacing:0.23px">Layer 0</div>
<div class="a" style="left:112.5px;top:48.5px;width:9.5px;height:63px;background:#f2f2f2;border-left:1px solid #ddd"></div>
<svg class="a" style="left:114.3px;top:51.5px" width="6" height="5" viewBox="0 0 6 5"><path d="M1 4 L3 1.5 L5 4" fill="none" stroke="#bbb" stroke-width=".9"/></svg><svg class="a" style="left:114.3px;top:104px" width="6" height="5" viewBox="0 0 6 5"><path d="M1 1 L3 3.5 L5 1" fill="none" stroke="#bbb" stroke-width=".9"/></svg>
<div class="a" style="left:0;top:110.8px;width:122px;height:1px;background:#555"></div><div class="a" style="left:112px;top:111.8px;width:1px;height:9px;background:#777"></div>
<svg class="a" style="left:12px;top:112.3px" width="97" height="8.7" viewBox="0 0 100 9"><circle cx="7.5" cy="4.5" r="3.2" fill="#111"/><path d="M6.5 6.5 L9 2.5" stroke="#fff" stroke-width=".8"/><rect x="12" y="7" width="1.2" height="1.2" fill="#222"/><rect x="20.5" y="1.5" width="7.5" height="6.5" fill="#ddd" stroke="#333" stroke-width=".8"/><circle cx="24.2" cy="4.7" r="1.8" fill="#fff" stroke="#444" stroke-width=".5"/><path d="M38 3 h3 l1 1 h5 v4 h-9 Z" fill="#ccc" stroke="#555" stroke-width=".7"/><circle cx="58.5" cy="4.5" r="3.2" fill="#eee" stroke="#111" stroke-width=".8"/><path d="M58.5 1.3 a3.2 3.2 0 0 0 0 6.4 Z" fill="#111"/><rect x="63" y="7" width="1.2" height="1.2" fill="#222"/><path d="M74 2 h4.5 l2 2 v4.5 h-6.5 Z" fill="#eee" stroke="#444" stroke-width=".8"/><rect x="76.5" y="5" width="3" height="3" fill="#888"/><path d="M91.5 3 h5.5 l-.6 5.5 h-4.3 Z M90.8 2.5 h7 M93 1.2 h2.5" fill="#ddd" stroke="#999" stroke-width=".7"/></svg>
</div>

<!-- Status bar -->
<div id="status" class="a">
  <div class="box" style="left:0;top:1.5px;width:28px;height:9.5px;border-color:#aaa"></div>
  <div class="t" style="left:8px">25%</div>
  <div class="a" style="left:33px;top:3px;width:5px;height:6px;border:1px solid #333;background:#ddd"></div>
  <div class="t" style="left:44.3px;letter-spacing:-0.05px">Doc: 12.4M/5.91M</div>
  <div class="a" style="left:164px;top:3px;border:3px solid transparent;border-left:4px solid #111;border-right:none"></div>
  <div class="t" style="left:172.5px;letter-spacing:0.02px">Click on desired image area to fill with foreground color.  Use Shift, Alt and Ctrl for additional options</div>
  <div class="a" style="left:0;top:11px;width:600px;height:2px;background:#5f4a2e"></div>
</div>

</body></html>
